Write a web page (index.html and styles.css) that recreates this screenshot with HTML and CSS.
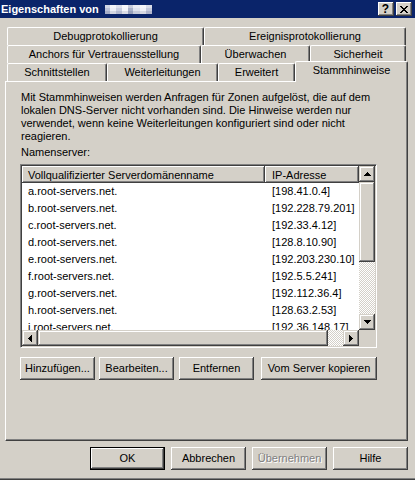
FILE: index.html
```html
<!DOCTYPE html>
<html lang="de">
<head>
<meta charset="utf-8">
<title>Eigenschaften</title>
<link rel="stylesheet" href="styles.css">
</head>
<body>
<div class="window">
  <div class="titlebar">
    <span class="title">Eigenschaften von</span>
    <span class="blur"></span>
    <div class="caption-btns">
      <span class="cbtn help">?</span>
      <span class="cbtn close"><svg width="8" height="7" viewBox="0 0 8 7"><path d="M0 0h2v1H0zM6 0h2v1H6zM1 1h2v1H1zM5 1h2v1H5zM2 2h4v1H2zM3 3h2v1H3zM2 4h4v1H2zM1 5h2v1H1zM5 5h2v1H5zM0 6h2v1H0zM6 6h2v1H6z" fill="#000"/></svg></span>
    </div>
  </div>

  <div class="tabs">
    <div class="tabrow">
      <div class="tab t-debug">Debugprotokollierung</div>
      <div class="tab t-ereignis">Ereignisprotokollierung</div>
    </div>
    <div class="tabrow">
      <div class="tab t-anchors">Anchors für Vertrauensstellung</div>
      <div class="tab t-ueberw">Überwachen</div>
      <div class="tab t-sicher">Sicherheit</div>
    </div>
    <div class="tabrow">
      <div class="tab t-schnitt">Schnittstellen</div>
      <div class="tab t-weiter">Weiterleitungen</div>
      <div class="tab t-erweitert">Erweitert</div>
      <div class="tab t-stamm selected">Stammhinweise</div>
    </div>
  </div>

  <div class="panel">
    <p class="intro">Mit Stammhinweisen werden Anfragen für Zonen aufgelöst, die auf dem<br>lokalen DNS-Server nicht vorhanden sind. Die Hinweise werden nur<br>verwendet, wenn keine Weiterleitungen konfiguriert sind oder nicht<br>reagieren.</p>
    <div class="label">Namenserver:</div>

    <div class="listview">
      <div class="lv-view">
        <div class="lv-header">
          <div class="hcell c1">Vollqualifizierter Serverdomänenname</div>
          <div class="hcell c2">IP-Adresse</div>
        </div>
        <div class="lv-row"><span class="c1">a.root-servers.net.</span><span class="c2">[198.41.0.4]</span></div>
        <div class="lv-row"><span class="c1">b.root-servers.net.</span><span class="c2">[192.228.79.201]</span></div>
        <div class="lv-row"><span class="c1">c.root-servers.net.</span><span class="c2">[192.33.4.12]</span></div>
        <div class="lv-row"><span class="c1">d.root-servers.net.</span><span class="c2">[128.8.10.90]</span></div>
        <div class="lv-row"><span class="c1">e.root-servers.net.</span><span class="c2">[192.203.230.10]</span></div>
        <div class="lv-row"><span class="c1">f.root-servers.net.</span><span class="c2">[192.5.5.241]</span></div>
        <div class="lv-row"><span class="c1">g.root-servers.net.</span><span class="c2">[192.112.36.4]</span></div>
        <div class="lv-row"><span class="c1">h.root-servers.net.</span><span class="c2">[128.63.2.53]</span></div>
        <div class="lv-row"><span class="c1">i.root-servers.net.</span><span class="c2">[192.36.148.17]</span></div>
      </div>
      <div class="vscroll">
        <span class="sbtn"><svg width="7" height="4" viewBox="0 0 7 4"><path d="M3 0h1v1h1v1h1v1h1v1H0V3h1V2h1V1h1z" fill="#000"/></svg></span>
        <span class="vthumb"></span>
        <span class="track"></span>
        <span class="sbtn"><svg width="7" height="4" viewBox="0 0 7 4"><path d="M0 0h7v1H6v1H5v1H4v1H3V3H2V2H1V1H0z" fill="#000"/></svg></span>
      </div>
      <div class="hscroll">
        <span class="sbtn"><svg width="4" height="7" viewBox="0 0 4 7"><path d="M3 0h1v7H3V6H2V5H1V4H0V3h1V2h1V1h1z" fill="#000"/></svg></span>
        <span class="hthumb"></span>
        <span class="track"></span>
        <span class="sbtn"><svg width="4" height="7" viewBox="0 0 4 7"><path d="M0 0h1v1h1v1h1v1h1v1H3v1H2v1H1v1H0z" fill="#000"/></svg></span>
      </div>
      <div class="corner"></div>
    </div>

    <div class="actions">
      <span class="btn b-add">Hinzufügen...</span>
      <span class="btn b-edit">Bearbeiten...</span>
      <span class="btn b-del">Entfernen</span>
      <span class="btn b-copy">Vom Server kopieren</span>
    </div>
  </div>

  <div class="footer">
    <span class="btn default">OK</span>
    <span class="btn">Abbrechen</span>
    <span class="btn disabled">Übernehmen</span>
    <span class="btn">Hilfe</span>
  </div>
</div>
</body>
</html>
```

FILE: styles.css
```css
* { box-sizing: border-box; }

body {
  margin: 0;
  background: #D4D0C8;
  font: 11px "Liberation Sans", Arial, sans-serif;
  color: #000;
}

.window {
  width: 415px;
  height: 480px;
  overflow: hidden;
  display: flex;
  flex-direction: column;
  border-bottom: 1px solid #404040;
  box-shadow: inset 0 -1px #808080;
}

/* title bar */
.titlebar {
  height: 18px;
  flex: none;
  background: #0A246A;
  color: #fff;
  display: flex;
  align-items: center;
  padding-left: 1px;
}
.title {
  font-weight: bold;
  line-height: 16px;
  white-space: nowrap;
}
.blur {
  width: 47px;
  height: 9px;
  margin-left: 6px;
  margin-top: 1px;
  background:
    linear-gradient(180deg, rgba(255,255,255,.35) 0 3px, transparent 3px 6px, rgba(30,40,90,.12) 6px),
    linear-gradient(90deg, #b9c0d6 0 5px, #eceef5 5px 11px, #c9cee0 11px 17px, #f4f5fa 17px 23px, #a9b1c9 23px 28px, #dde1ec 28px 35px, #f0f1f7 35px 41px, #c4c9dc 41px);
}
.caption-btns {
  margin-left: auto;
  align-self: flex-start;
  display: flex;
  gap: 2px;
  padding: 2px 3px 0 0;
}
.cbtn {
  width: 16px;
  height: 14px;
  background: #D4D0C8;
  box-shadow: inset -1px -1px #404040, inset 1px 1px #fff, inset -2px -2px #808080;
  display: flex;
  align-items: center;
  justify-content: center;
  color: #000;
}
.help {
  font-weight: bold;
  font-size: 12px;
  line-height: 14px;
  padding-right: 1px;
}
.close svg { display: block; margin-right: 1px; }

/* tabs */
.tabs {
  margin-top: 9px;
  padding-left: 7px;
  display: flex;
  flex-direction: column;
  flex: none;
}
.tabrow {
  display: flex;
  height: 18px;
}
.tab {
  flex: none;
  height: 18px;
  border-top: 1px solid #fff;
  border-left: 1px solid #fff;
  border-right: 1px solid #404040;
  box-shadow: inset -1px 0 #808080;
  border-radius: 2px 2px 0 0;
  text-align: center;
  line-height: 17px;
  white-space: nowrap;
}
.t-debug { width: 197px; }
.t-ereignis { width: 202px; }
.t-anchors { width: 194px; }
.t-ueberw { width: 109px; }
.t-sicher { width: 96px; }
.t-schnitt { width: 100px; }
.t-weiter { width: 111px; }
.t-erweitert { width: 77px; }
.t-stamm { width: 113px; }
.selected {
  align-self: flex-start;
  margin-top: -2px;
  height: 21px;
  position: relative;
  z-index: 1;
  background: #D4D0C8;
}

/* panel */
.panel {
  flex: none;
  margin-left: 5px;
  width: 403px;
  height: 360px;
  border: 1px solid;
  border-color: #fff #404040 #404040 #fff;
  box-shadow: inset -1px -1px #808080;
  padding: 9px 0 0 14px;
}
.intro {
  margin: 0 0 0 1px;
  line-height: 13px;
  white-space: nowrap;
}
.label {
  margin: 3px 0 0 1px;
  line-height: 13px;
}

/* list view */
.listview {
  margin-top: 5px;
  width: 357px;
  height: 184px;
  border: 1px solid;
  border-color: #808080 #fff #fff #808080;
  box-shadow: inset 1px 1px #404040, inset -1px -1px #D4D0C8;
  padding: 1px;
  background: #fff;
  display: grid;
  grid-template-columns: 1fr 16px;
  grid-template-rows: 1fr 16px;
}
.lv-view {
  overflow: hidden;
  background: #fff;
  min-height: 0;
}
.lv-header {
  display: flex;
  height: 17px;
}
.hcell {
  height: 17px;
  background: #D4D0C8;
  box-shadow: inset -1px -1px #404040, inset 1px 1px #fff, inset -2px -2px #808080;
  line-height: 16px;
  padding: 1px 0 0 6px;
  white-space: nowrap;
}
.hcell.c1 { width: 243px; flex: none; }
.hcell.c2 { flex: 1; padding-left: 7px; }
.lv-row {
  display: flex;
  height: 17px;
  line-height: 17px;
  white-space: nowrap;
}
.lv-row .c1 { width: 243px; flex: none; padding-left: 6px; }
.lv-row .c2 { padding-left: 7px; }

.vscroll, .hscroll {
  display: flex;
  background: repeating-conic-gradient(#fff 0 25%, #D4D0C8 0 50%) 0 0 / 2px 2px;
}
.vscroll { flex-direction: column; }
.sbtn, .vthumb, .hthumb {
  flex: none;
  background: #D4D0C8;
  box-shadow: inset -1px -1px #404040, inset 1px 1px #D4D0C8, inset -2px -2px #808080, inset 2px 2px #fff;
}
.sbtn {
  width: 16px;
  height: 16px;
  display: flex;
  align-items: center;
  justify-content: center;
}
.sbtn svg { display: block; }
.vthumb { width: 16px; height: 80px; }
.hthumb { height: 16px; width: 290px; }
.track { flex: 1; }
.corner { background: #D4D0C8; }

/* buttons */
.btn {
  display: block;
  flex: none;
  width: 75px;
  height: 23px;
  background: #D4D0C8;
  box-shadow: inset -1px -1px #404040, inset 1px 1px #fff, inset -2px -2px #808080, inset 2px 2px #D4D0C8;
  text-align: center;
  line-height: 23px;
  white-space: nowrap;
}
.btn.default {
  border: 1px solid #000;
  line-height: 21px;
}
.btn.disabled {
  color: #808080;
  text-shadow: 1px 1px #fff;
}
.actions {
  display: flex;
  margin-top: 9px;
}
.b-edit { margin-left: 4px; }
.b-del { margin-left: 5px; }
.b-copy { margin-left: 7px; width: 116px; }

.footer {
  display: flex;
  justify-content: flex-end;
  gap: 6px;
  padding-right: 7px;
  margin-top: 6px;
}
```
